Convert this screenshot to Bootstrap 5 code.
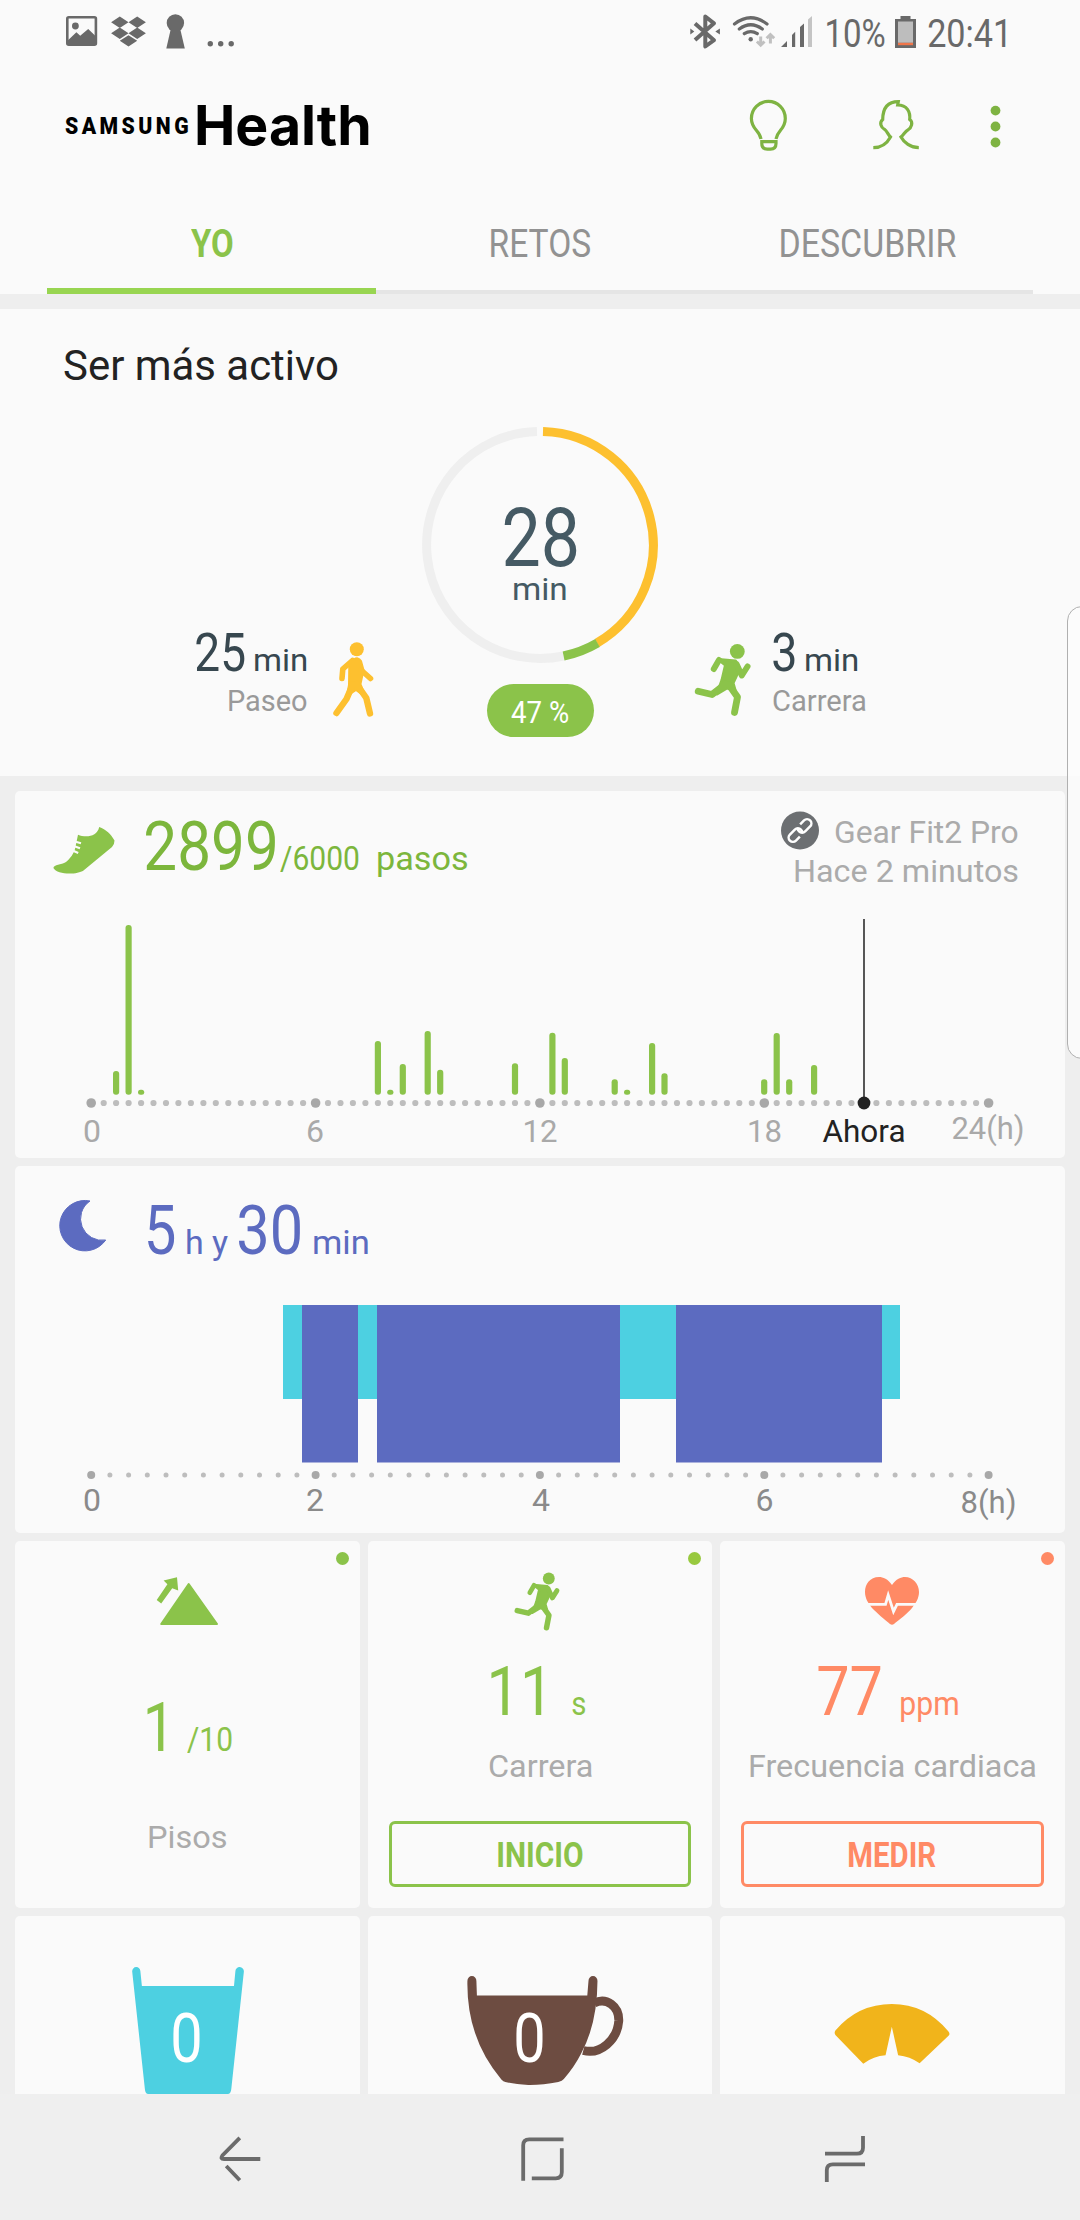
<!DOCTYPE html>
<html lang="es">
<head>
<meta charset="utf-8">
<meta name="viewport" content="width=device-width, initial-scale=1">
<title>Samsung Health</title>
<link href="https://cdn.jsdelivr.net/npm/bootstrap@5.3.0/dist/css/bootstrap.min.css" rel="stylesheet">
<style>
  :root { --leaf:#8bc34a; --leaf-dark:#7cb63c; --amber:#fdc02f; --indigo:#5c6bc0; --aqua:#4dd0e1; --coral:#ff8a65; --paper:#fafafa; --gap:#eeeeee; }
  body { width:1080px; height:2220px; overflow:hidden; background:var(--gap); font-family:Roboto,"Liberation Sans",sans-serif; line-height:1; color:#222; }
  svg { display:block; flex:none; }
  .fit { display:inline-block; line-height:1; white-space:nowrap; flex:none; }
  .fit > span { display:inline-block; transform-origin:0 50%; }
  .paper { background:var(--paper); }
  .status { height:60px; padding:10px 74px 0 64px; color:#696969; }
  .status-text { font-size:39.5px; margin-top:4px; }
  .brand-row { height:130px; padding:30px 76px 0 65px; }
  .brand-small { font-size:24.5px; font-weight:900; letter-spacing:4px; margin-top:24px; color:#000; }
  .brand-big { font-size:55px; font-weight:700; font-family:Inter,Roboto,sans-serif; margin:8px 0 0 9px; color:#000; }
  .tabs { height:104px; margin:0 47px; }
  .tab-item { height:104px; padding:34px 0 0; font-size:39.5px; color:#929292; border-radius:0; border-bottom:4px solid #e5e5e5; text-align:center; }
  .tab-item.active { color:var(--leaf); font-weight:700; border-bottom:6px solid #98d551; }
  .hero { height:467px; margin-top:15px; padding-top:36px; }
  .hero-title { font-size:42px; margin:0 0 38px 64px; height:42px; }
  .hero-title .fit { vertical-align:top; }
  .slate { color:#455a64; }
  .slate-dark { color:#37474f; }
  .side-top { margin-top:202px; }
  .n81 { font-size:81px; } .n68 { font-size:68px; } .n53 { font-size:53px; } .n34 { font-size:34px; } .n32 { font-size:32px; }
  .ring-text { top:79px; }
  .ring-text .n81, .ring-text .n81 > span { line-height:69px; height:69px; }
  .side-label { font-size:29px; color:#999; margin-top:7px; height:29px; }
  .pct { width:107px; height:53px; margin-top:19px; padding:3px 0 0; font-size:31px; font-weight:400; background:var(--leaf); }
  .board { padding:15px 15px 0; gap:8px; height:1318px; overflow:hidden; }
  .tile { border:0; border-radius:5px; background:var(--paper); height:367px; }
  .tile-cut { height:178px; border-radius:5px 5px 0 0; }
  .leafy { color:var(--leaf); } .leafy-dark { color:var(--leaf-dark); } .indigo { color:var(--indigo); } .coral { color:var(--coral); }
  .muted { color:#ababab; }
  .dotmark { width:13px; height:13px; top:11px; right:11px; border-radius:50%; background:currentColor; }
  .btn-act { height:66px; margin:39px 21px 0; padding:3px 0 0; border:3px solid currentColor; border-radius:6px; font-size:34.5px; font-weight:700; }
  .edge { left:1067px; top:606px; width:30px; height:453px; border:1.5px solid #b0b0b0; border-radius:18px; background:rgba(252,252,252,.8); }
  .sysnav { height:126px; background:#efefef; padding:36px 210px 0 216px; }
  svg text { font-family:Roboto,"Liberation Sans",sans-serif; }
</style>
</head>
<body class="position-relative">

<header class="paper">
  <div class="status d-flex align-items-start">
    <svg width="176" height="42" viewBox="64 10 176 42" fill="#696969">
      <rect x="67.3" y="17.3" width="28.6" height="27.4" rx="1.5" fill="none" stroke="#696969" stroke-width="2.6"/>
      <circle cx="75.4" cy="26" r="3.4"/><path d="M68 40.300 76.400 32.300 80.200 35.700 88.200 29 95 35.500V45H68z"/>
      <path d="M119.800 16.600l8.700 5.700-8.700 5.700-8.700-5.700zM137.200 16.600l8.700 5.700-8.700 5.700-8.700-5.700zM119.800 27.600l8.700 5.700-8.700 5.700-8.700-5.700zM137.200 27.600l8.700 5.700-8.700 5.700-8.700-5.700zM128.500 35.300l8.700 5.400-8.700 5.700-8.700-5.700z"/>
      <circle cx="175.400" cy="23" r="8.700"/><path d="M171 28h9l4.800 20.400h-18.500z"/>
      <circle cx="210.300" cy="43.700" r="2.700"/><circle cx="220.700" cy="43.700" r="2.700"/><circle cx="231.200" cy="43.700" r="2.700"/>
    </svg>
    <svg class="ms-auto" width="126" height="42" viewBox="688 10 126 42" fill="none" stroke="#696969">
      <path d="M695 23.500 714 40.200 705.300 46.500V16.500L714 23.300 695 40" stroke-width="4" stroke-linejoin="round"/>
      <path d="M690.300 28.500 694.300 31.500 690.300 34.500zM719.900 28.500 715.300 31.500 719.900 34.500z" fill="#696969" stroke="none"/>
      <g stroke-width="3.200" stroke-linecap="round"><path d="M734.500 24Q750.700 11.500 767 24M739.300 29Q750.700 20.500 762.300 29M744.300 33.700Q750.700 29.500 757.300 33.700"/></g>
      <circle cx="750.700" cy="39.300" r="2.200" fill="#696969" stroke="none"/>
      <g stroke="#c0c0c0" stroke-width="3"><path d="M760.700 36.500V45M756.900 41.500l3.800 3.700 3.800-3.700M770.400 43.500V35M766.600 38.300l3.800-3.700 3.800 3.700"/></g>
      <path d="M781 47l6-6v6zM792 47V35l3.200-3.200V47zM800 47V27l4-3.500V47z" fill="#696969" stroke="none"/>
      <path d="M808 47V19.500l4-3.500v31z" fill="#c4c4c4" stroke="none"/>
    </svg>
    <span class="fit status-text" style="margin-left:13px" data-w="58">10%</span>
    <svg style="margin-left:8px" width="25" height="42" viewBox="893 10 25 42"><path d="M900.500 16h10v3h5.500v29h-21V19h5.500z" fill="#696969"/><rect x="898" y="21.500" width="15" height="21.300" fill="#bdbdbd"/><rect x="898" y="42.800" width="15" height="2.400" fill="#f0764a"/></svg>
    <span class="fit status-text" style="margin-left:10px" data-w="78">20:41</span>
  </div>
  <div class="brand-row d-flex align-items-start">
    <span class="fit brand-small" data-w="123">SAMSUNG</span>
    <span class="fit brand-big" data-w="171.5">Health</span>
    <svg class="ms-auto mt-1" width="260" height="62" viewBox="744 94 260 62" fill="none" stroke="#7eb342" stroke-width="3.200">
      <path d="M761 139C759.500 130 751.400 129.500 751.400 118.500A16.900 17 0 0 1 785.300 118.500C785.300 129.500 777.500 130 776 139"/>
      <path d="M761.800 141.600h14.200v2q0 5.600-5.500 5.600h-3.200q-5.500 0-5.500-5.600z"/>
      <path d="M873.300 147.700C881 147.700 887 143.500 890.500 137C888 134.500 887 131 884.500 129.300C881 127.500 879 122.500 882.700 119.500C882.800 112 885 101.700 898.300 101.700L897.700 105C907 105 910.500 112 909.700 119.500C913.500 122 911.500 128 908 129.800C905 131.500 904 134.500 901 137C904 142.500 910.500 147.700 918.800 147.700"/>
      <g fill="#7eb342" stroke="none"><circle cx="995.500" cy="110.600" r="4.900"/><circle cx="995.500" cy="126.500" r="4.900"/><circle cx="995.500" cy="142.500" r="4.900"/></g>
    </svg>
  </div>
  <nav class="tabs nav nav-fill flex-nowrap">
    <a class="nav-link tab-item active" style="flex:1 1 0"><span class="fit" data-w="41.500">YO</span></a>
    <a class="nav-link tab-item" style="flex:1 1 0"><span class="fit" data-w="99">RETOS</span></a>
    <a class="nav-link tab-item" style="flex:1 1 0"><span class="fit" data-w="175">DESCUBRIR</span></a>
  </nav>
</header>

<section class="hero paper">
  <h1 class="hero-title fw-normal"><span class="fit" data-w="274">Ser más activo</span></h1>
  <div class="d-flex align-items-start">
    <div class="d-flex justify-content-end side-top" style="width:420px;padding-right:44px">
      <div class="d-flex flex-column align-items-end">
        <div class="d-flex align-items-baseline slate-dark" style="gap:10.5px;height:53px"><span class="fit n53" data-w="48.500">25</span><span class="fit n32" data-w="51.500">min</span></div>
        <span class="fit side-label" data-w="78">Paseo</span>
      </div>
      <svg style="margin:13px 0 0 23.5px" width="46" height="80" viewBox="330 640 46 80" fill="#fdc02f" stroke="#fdc02f" stroke-linecap="round" stroke-linejoin="round">
        <circle cx="356.800" cy="649.300" r="7" stroke="none"/>
        <path d="M354 659.500Q358 656.500 361 661L363.500 670 360.500 684 365.500 697 356 690 347 696 349 685 349.300 664z" stroke-width="2"/>
        <path d="M352.500 660.500 342.800 669 342 678.500M361 670 370.500 678.500" fill="none" stroke-width="5.600"/>
        <path d="M352.500 685 346.500 699 336.500 713M356.500 684 366.300 698 370 713.500" fill="none" stroke-width="6.400"/>
      </svg>
    </div>
    <div class="d-flex flex-column align-items-center" style="width:240px">
      <div class="position-relative">
        <svg width="240" height="240" viewBox="420 425 240 240" fill="none" stroke-width="9">
          <path d="M563.600 656A113.500 113.500 0 1 1 537 431.500" stroke="#efefef"/>
          <path d="M543 431.500A113.500 113.500 0 0 1 597 643" stroke="#fdc02f"/>
          <path d="M597.500 643A113.500 113.500 0 0 1 563.600 656" stroke="#8bc34a"/>
        </svg>
        <div class="ring-text slate position-absolute start-0 w-100 d-flex flex-column align-items-center">
          <span class="fit n81" data-w="73">28</span>
          <span class="fit n32" data-w="52">min</span>
        </div>
      </div>
      <div class="badge rounded-pill pct d-flex justify-content-center align-items-center"><span class="fit" data-w="57.500">47 %</span></div>
    </div>
    <div class="d-flex side-top">
      <svg style="margin:14px 0 0 32px" width="62" height="78" viewBox="692 641 62 78"><g id="runner" fill="#8bc34a" stroke="#8bc34a" stroke-linecap="round" stroke-linejoin="round">
        <circle cx="737.300" cy="651.400" r="7.400" stroke="none"/>
        <path d="M718.500 659.500 735.500 661 739.500 669 733 683 735 690 727 688 717 694 722 680 725.500 665z" stroke-width="3"/>
        <path d="M719 660 713.800 669M736.500 664 741.800 675.500 747.500 666.500" fill="none" stroke-width="6"/>
        <path d="M725.500 684 712 694.500 698.200 691.200M729 685 737.500 697 734.500 712.500" fill="none" stroke-width="6.800"/>
      </g></svg>
      <div class="d-flex flex-column align-items-start" style="margin-left:19px">
        <div class="d-flex align-items-baseline slate-dark" style="gap:11px;height:53px"><span class="fit n53" data-w="22">3</span><span class="fit n32" data-w="51.500">min</span></div>
        <span class="fit side-label" data-w="93">Carrera</span>
      </div>
    </div>
  </div>
</section>

<main class="board d-flex flex-column">
  <article class="card tile flex-shrink-0">
    <div class="d-flex align-items-start" style="height:121px">
      <svg style="margin:31px 0 0 35px" width="70" height="56" viewBox="50 822 70 56"><path d="M53.400 868C54 864.500 61 865 66 862C70 859 74 853 75 849L78 834.700C85 837.500 97 837.500 99.200 827C106 829.500 111 834 114.500 840.500Q114.500 844.500 112 847L83.500 870.500C77 875 57 875 53.400 868z" fill="#8bc34a"/><path d="M74 841.300l7 2M73 845.800l7 2.500M71.500 850l6.700 3" stroke="#fafafa" stroke-width="2.200"/></svg>
      <div class="d-flex align-items-baseline leafy-dark" style="margin:22px 0 0 11px"><span style="width:15px"></span><span class="fit n68" data-w="129">2899</span><span class="fit n34" style="margin-left:4.500px" data-w="79">/6000</span><span class="fit n34" style="margin-left:19.500px" data-w="89">pasos</span></div>
      <div class="ms-auto d-flex flex-column align-items-end muted n32" style="margin:20px 48px 0 0">
        <div class="d-flex align-items-start" style="height:44px">
          <svg width="38" height="39" viewBox="781 811 38 39"><circle cx="800" cy="830.500" r="19" fill="#6c6f72"/><g transform="translate(800 830.500) rotate(-45)" fill="none" stroke="#fff" stroke-width="2.500"><path id="lnk" d="M-4.500 4.300H-10a4.300 4.300 0 0 1 0-8.600h7a4.300 4.300 0 0 1 4.300 4.300q0 2-1 3"/><use href="#lnk" transform="rotate(180)"/></g></svg>
          <span class="fit" style="margin:5px 0 0 15.500px" data-w="182.500">Gear Fit2 Pro</span>
        </div>
        <span class="fit" data-w="222.500">Hace 2 minutos</span>
      </div>
    </div>
    <svg id="steps" width="1050" height="246" viewBox="15 912 1050 246" font-size="32" fill="#a9a9a9"></svg>
  </article>

  <article class="card tile flex-shrink-0">
    <div class="d-flex align-items-start" style="height:124px">
      <svg style="margin:30px 0 0 41px" width="54" height="60" viewBox="56 1196 54 60"><path d="M90 1201A25.200 25.200 0 1 0 105.700 1240A21.500 21.500 0 0 1 90 1201z" fill="#5c6bc0" stroke="#5c6bc0" stroke-width="1" stroke-linejoin="round"/></svg>
      <div class="d-flex align-items-baseline indigo" style="margin:31px 0 0 37.500px"><span class="fit n68" data-w="26.500">5</span><span class="fit n34" style="margin-left:13px" data-w="15">h</span><span class="fit n34" style="margin-left:10px" data-w="16">y</span><span class="fit n68" style="margin-left:11px" data-w="61.500">30</span><span class="fit n34" style="margin-left:13px" data-w="54">min</span></div>
    </div>
    <svg id="sleep" width="1050" height="243" viewBox="15 1290 1050 243" font-size="32" fill="#8a8a8a"></svg>
  </article>

  <div class="d-flex gap-2 flex-shrink-0">
    <article class="card tile col align-items-center">
      <i class="dotmark leafy position-absolute"></i>
      <svg style="margin-top:29px" width="71" height="62" viewBox="152 1570 71 62" fill="#8bc34a"><path d="M188.700 1584 161.200 1624H217z" stroke="#8bc34a" stroke-width="2" stroke-linejoin="round"/><path d="M156.700 1600l4.500 3.500 11-15.300 6 2.300-1.200-13.300-13.400 3.200 3.800 3.800z"/></svg>
      <div class="d-flex align-items-baseline leafy" style="margin-top:62px;padding-left:4px;height:68px"><span class="fit n68" data-w="17">1</span><span class="fit n34" style="margin-left:23px" data-w="45">/10</span></div>
      <span class="fit n32 muted" style="margin-top:59px" data-w="77">Pisos</span>
    </article>
    <article class="card tile col align-items-center">
      <i class="dotmark position-absolute" style="color:#98c93f"></i>
      <svg style="margin-top:27px" width="60" height="66" viewBox="689.200 638.400 74.400 81.900"><use href="#runner"/></svg>
      <div class="d-flex align-items-baseline leafy" style="margin-top:24px;padding-right:5px;height:68px"><span class="fit n68" data-w="51">11</span><span class="fit n34" style="margin-left:30px" data-w="13">s</span></div>
      <span class="fit n32 muted" style="margin-top:24px" data-w="103">Carrera</span>
      <button class="btn btn-act leafy align-self-stretch lh-1"><span class="fit" data-w="85">INICIO</span></button>
    </article>
    <article class="card tile col align-items-center">
      <i class="dotmark coral position-absolute"></i>
      <svg style="margin-top:27px" width="65" height="66" viewBox="860 1568 65 66"><path d="M892 1585C888 1579 883 1577 879 1577C870 1577 865 1584 865 1592C865 1598 868 1603 872 1608C877 1613 885 1620 890 1624Q892 1625.500 894 1624C899 1620 908 1613 912 1608C916 1603 919 1598 919 1592C919 1584 913 1577 905 1577C901 1577 896 1579 892 1585z" fill="#ff8a65"/><path d="M866 1604.300H885.500L888.200 1595 893.500 1611.500 897 1604.300H919" fill="none" stroke="#fafafa" stroke-width="2.800"/></svg>
      <div class="d-flex align-items-baseline coral" style="margin-top:24px;padding-right:9px;height:68px"><span class="fit n68" data-w="63">77</span><span class="fit n34" style="margin-left:20px" data-w="57">ppm</span></div>
      <span class="fit n32 muted" style="margin-top:24px" data-w="285.500">Frecuencia cardiaca</span>
      <button class="btn btn-act coral align-self-stretch lh-1"><span class="fit" data-w="87">MEDIR</span></button>
    </article>
  </div>

  <div class="d-flex gap-2 flex-shrink-0">
    <article class="card tile tile-cut col">
      <svg class="w-100" height="178" viewBox="15 1916 345 178"><path d="M132.300 1971.500a4.100 4.300 0 0 1 8.200-.3L142 1986H234.200L235.600 1971.200a4.200 4.300 0 0 1 8.500.3L231.500 2089Q231 2094 228 2094H148.500Q145.300 2094 145 2089z" fill="#4dd0e1"/><text x="170.500" y="2062" font-size="68" fill="#fff" textLength="32.500" lengthAdjust="spacingAndGlyphs">0</text></svg>
    </article>
    <article class="card tile tile-cut col">
      <svg class="w-100" height="178" viewBox="367.500 1916 345 178"><path d="M467 1981a4.500 5 0 0 1 9 0L476.500 1995.500H587L588.200 1981a4.500 5 0 0 1 9 0Q597 2024 580.600 2054 574 2067 563.500 2079 562 2081 558 2082 542 2085.200 528 2085 514 2084.500 505 2082 503 2081.500 501 2079.500 466 2038 467 1981z" fill="#6d4c41"/><path d="M594 2003C606 1997 619 2006 618.500 2021C617 2040 600 2055 583 2050.500" fill="none" stroke="#6d4c41" stroke-width="8.900"/><text x="513" y="2062" font-size="68" fill="#fff" textLength="32.500" lengthAdjust="spacingAndGlyphs">0</text></svg>
    </article>
    <article class="card tile tile-cut col">
      <svg class="w-100" height="178" viewBox="720 1916 345 178"><path d="M835.500 2035Q834 2033 835.500 2030.500Q858 2004 892 2004T948.700 2031.500Q950.500 2034 949 2035.500L919.800 2063.300Q910 2056.500 898.300 2055.300L892 2026.700 885.700 2055.300Q874 2056 863.400 2063.700z" fill="#f1b41b"/></svg>
    </article>
  </div>
</main>

<aside class="edge position-absolute"></aside>

<footer class="sysnav d-flex align-items-start justify-content-between">
  <svg width="50" height="60" viewBox="216 2130 50 60" fill="none" stroke="#6b6b6b" stroke-width="3.800"><path d="M239.800 2137.800 222.400 2155.500Q220 2159 224 2159H260.300M226.200 2166 239.800 2180.300"/></svg>
  <svg width="50" height="60" viewBox="517.500 2130 50 60" fill="none" stroke="#6b6b6b" stroke-width="3.800"><path d="M522.700 2180.700V2145.300q0-6 6-6H563M561.300 2148.300V2172.300q0 6-6 6H531.300"/></svg>
  <svg width="50" height="60" viewBox="820 2130 50 60" fill="none" stroke="#6b6b6b" stroke-width="3.800"><path d="M825 2153.700H857q6 0 6-6V2136M826.800 2182V2170.300q0-6 6-6H865"/></svg>
</footer>

<script src="https://cdn.jsdelivr.net/npm/bootstrap@5.3.0/dist/js/bootstrap.bundle.min.js"></script>
<script>
  const X0 = 91.2, X1 = 988.6;

  // Dotted time axis: small dots with a larger one at each labelled hour.
  function axis(count, major, y, small, big) {
    let out = '';
    for (let i = 0; i <= count; i++) {
      const m = i % major === 0;
      out += `<circle cx="${(X0 + (X1 - X0) * i / count).toFixed(1)}" cy="${y}" r="${m ? big : small}" fill="${m ? '#a8a8a8' : '#bdbdbd'}"/>`;
    }
    return out;
  }
  function label(s, cx, y, w, fill) {
    return `<text x="${cx}" y="${y}" text-anchor="middle" textLength="${w}" lengthAdjust="spacingAndGlyphs"${fill ? ` fill="${fill}"` : ''}>${s}</text>`;
  }

  // Steps per 20 minutes: [slot, bar height].
  const steps = [[2,23.7],[3,169.7],[4,5],[23,53.7],[24,5],[25,30.7],[27,63.7],[28,25],[34,31.5],[37,62],[38,36.7],[42,15.5],[43,5],[45,51.7],[46,21.5],[54,15.5],[55,61.7],[56,15.5],[58,29.7]];
  document.getElementById('steps').innerHTML =
    steps.map(([i, h]) => `<rect x="${(X0 + (X1 - X0) * i / 72 - 3.1).toFixed(1)}" y="${(1094.7 - h).toFixed(1)}" width="6.2" height="${h}" rx="${Math.min(3, h / 2)}" fill="#8bc34a"/>`).join('') +
    axis(72, 18, 1103, 3.1, 4.8) +
    '<path d="M864 919V1103" stroke="#444" stroke-width="1.8"/><circle cx="864" cy="1103" r="6.4" fill="#222"/>' +
    label('0', 92, 1142, 18) + label('6', 315, 1142, 18) + label('12', 540, 1142, 35) + label('18', 764.5, 1142, 35) +
    label('Ahora', 864, 1142, 83, '#222') + label('24(h)', 988, 1139, 73);

  // Sleep phases: [start, end, restless].
  const sleep = [[283,302,1],[302,358,0],[358,377,1],[377,620,0],[620,676,1],[676,882,0],[882,900,1]];
  document.getElementById('sleep').innerHTML =
    sleep.map(([a, b, r]) => `<rect x="${a}" y="1305" width="${b - a}" height="${r ? 94 : 157.5}" fill="${r ? '#4dd0e1' : '#5c6bc0'}"/>`).join('') +
    axis(48, 12, 1475, 2.5, 4) +
    label('0', 92, 1511, 18) + label('2', 315, 1511, 18) + label('4', 541, 1511, 18) + label('6', 764.5, 1511, 18) + label('8(h)', 988.5, 1513, 56);

  // Condense each label to its design width, measured on the drawn ink.
  const ctx = document.createElement('canvas').getContext('2d');
  document.querySelectorAll('.fit').forEach(el => {
    const cs = getComputedStyle(el), w = +el.dataset.w, t = el.textContent;
    ctx.font = `${cs.fontWeight} ${cs.fontSize} ${cs.fontFamily}`;
    const gaps = (parseFloat(cs.letterSpacing) || 0) * (t.length - 1);
    const m = ctx.measureText(t), ink = m.actualBoundingBoxLeft + m.actualBoundingBoxRight + gaps, k = w / ink;
    const inner = document.createElement('span');
    inner.textContent = t;
    inner.style.transform = `translateX(${m.actualBoundingBoxLeft * k}px) scaleX(${k})`;
    el.textContent = '';
    el.appendChild(inner);
    el.style.width = w + 'px';
  });
</script>
</body>
</html>
